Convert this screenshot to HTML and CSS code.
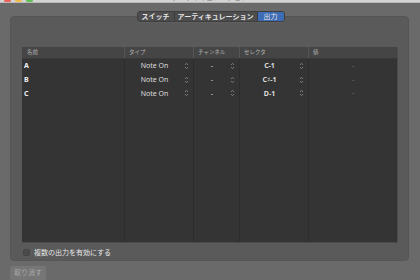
FILE: index.html
```html
<!DOCTYPE html>
<html lang="ja">
<head>
<meta charset="utf-8">
<link rel="stylesheet" href="styles.css">
</head>
<body>
<div class="window">
  <div class="titlebar">
    <div class="lights">
      <span class="light red"></span>
      <span class="light yellow"></span>
      <span class="light green"></span>
    </div>
    <div class="title">アーティキュレーション</div>
  </div>
  <div class="seg-wrap">
    <div class="segmented">
      <div class="seg s1">スイッチ</div>
      <div class="seg s2">アーティキュレーション</div>
      <div class="seg active">出力</div>
    </div>
  </div>
  <div class="panel">
    <div class="table">
      <div class="row head">
        <div class="cell">名前</div>
        <div class="cell">タイプ</div>
        <div class="cell">チャンネル</div>
        <div class="cell">セレクタ</div>
        <div class="cell">値</div>
      </div>
      <div class="body">
        <div class="row">
          <div class="cell name">A</div>
          <div class="cell pop"><span class="val">Note On</span><svg class="step" viewBox="0 0 5 8"><path d="M1 3 L2.5 1.3 L4 3 M1 5 L2.5 6.7 L4 5"/></svg></div>
          <div class="cell pop"><span class="val">-</span><svg class="step" viewBox="0 0 5 8"><path d="M1 3 L2.5 1.3 L4 3 M1 5 L2.5 6.7 L4 5"/></svg></div>
          <div class="cell pop"><span class="val b">C-1</span><svg class="step" viewBox="0 0 5 8"><path d="M1 3 L2.5 1.3 L4 3 M1 5 L2.5 6.7 L4 5"/></svg></div>
          <div class="cell dim">-</div>
        </div>
        <div class="row">
          <div class="cell name">B</div>
          <div class="cell pop"><span class="val">Note On</span><svg class="step" viewBox="0 0 5 8"><path d="M1 3 L2.5 1.3 L4 3 M1 5 L2.5 6.7 L4 5"/></svg></div>
          <div class="cell pop"><span class="val">-</span><svg class="step" viewBox="0 0 5 8"><path d="M1 3 L2.5 1.3 L4 3 M1 5 L2.5 6.7 L4 5"/></svg></div>
          <div class="cell pop"><span class="val b">C♯-1</span><svg class="step" viewBox="0 0 5 8"><path d="M1 3 L2.5 1.3 L4 3 M1 5 L2.5 6.7 L4 5"/></svg></div>
          <div class="cell dim">-</div>
        </div>
        <div class="row">
          <div class="cell name">C</div>
          <div class="cell pop"><span class="val">Note On</span><svg class="step" viewBox="0 0 5 8"><path d="M1 3 L2.5 1.3 L4 3 M1 5 L2.5 6.7 L4 5"/></svg></div>
          <div class="cell pop"><span class="val">-</span><svg class="step" viewBox="0 0 5 8"><path d="M1 3 L2.5 1.3 L4 3 M1 5 L2.5 6.7 L4 5"/></svg></div>
          <div class="cell pop"><span class="val b">D-1</span><svg class="step" viewBox="0 0 5 8"><path d="M1 3 L2.5 1.3 L4 3 M1 5 L2.5 6.7 L4 5"/></svg></div>
          <div class="cell dim">-</div>
        </div>
        <div class="row filler">
          <div class="cell"></div>
          <div class="cell"></div>
          <div class="cell"></div>
          <div class="cell"></div>
          <div class="cell"></div>
        </div>
      </div>
    </div>
    <label class="check">
      <span class="box"></span>
      <span class="check-label">複数の出力を有効にする</span>
    </label>
  </div>
  <div class="footer">
    <div class="btn">取り消す</div>
  </div>
</div>
</body>
</html>
```
FILE: styles.css
```css
* { box-sizing: border-box; }
html, body {
  margin: 0;
  padding: 0;
}
body {
  width: 420px;
  height: 280px;
  overflow: hidden;
  background: #6a6a6a;
  font-family: "Noto Sans CJK JP", "Noto Sans", "Liberation Sans", sans-serif;
  color: #e0e0e0;
}
.window {
  width: 420px;
  height: 280px;
  display: flex;
  flex-direction: column;
}
.titlebar {
  height: 3px;
  flex: 0 0 3px;
  background: #d4d4d4;
  border-bottom: 1px solid #b8b8b8;
  overflow: hidden;
  display: flex;
  position: relative;
}
.lights {
  display: flex;
  gap: 4px;
  padding-left: 4px;
  margin-top: -4px;
}
.light {
  width: 7px;
  height: 7px;
  border-radius: 50%;
  display: block;
}
.red { background: #f0605a; }
.yellow { background: #f3bd4f; }
.green { background: #5fc454; }
.title {
  position: absolute;
  left: 0;
  right: 0;
  top: -7px;
  text-align: center;
  font-size: 7px;
  line-height: 8px;
  color: #777;
}
.seg-wrap {
  display: flex;
  justify-content: center;
  padding-top: 8px;
  padding-left: 1px;
  position: relative;
  z-index: 2;
  height: 19px;
  flex: 0 0 19px;
}
.segmented {
  display: flex;
  height: 11px;
  border-radius: 3px;
  background: #4d4d4d;
  border: 1px solid #3e3e3e;
  overflow: hidden;
  box-shadow: 0 0.5px 0 rgba(255,255,255,0.08);
}
.seg {
  font-size: 7px;
  line-height: 9px;
  font-weight: 700;
  color: #e4e4e4;
  padding: 0;
  text-align: center;
  white-space: nowrap;
  border-right: 1px solid #3b3b3b;
}
.seg.s1 { width: 37px; }
.seg.s2 { width: 83px; }
.seg.active {
  background: #3d6db6;
  border-right: none;
  width: 26px;
  font-weight: 400;
}
.panel {
  margin: -6px 11px 0 10px;
  height: 246px;
  background: #5a5a5a;
  border-radius: 4px;
  border: 1px solid #555;
  padding: 30px 11px 0 11px;
  display: flex;
  flex-direction: column;
}
.table {
  height: 195px;
  display: flex;
  flex-direction: column;
  background: #343434;
  box-shadow: 0.5px 0.5px 0 #3c3c3c;
}
.row {
  display: grid;
  grid-template-columns: 102px 69px 46px 69px 1fr;
}
.head {
  height: 12px;
  background: #454545;
  border-bottom: 1px solid #3a3a3a;
}
.head .cell {
  font-size: 5.5px;
  line-height: 11px;
  color: #b4b4b4;
  padding-left: 4px;
  border-left: 1px solid #565656;
  white-space: nowrap;
}
.head .cell:first-child {
  border-left: none;
  padding-left: 5px;
}
.body {
  flex: 1;
  display: flex;
  flex-direction: column;
}
.body .row { height: 13.7px; }
.body .row.filler { flex: 1; }
.body .cell {
  border-left: 1px solid #2d2d2d;
  display: flex;
  align-items: center;
  font-family: "Noto Sans", "DejaVu Sans", "Noto Sans CJK JP", sans-serif;
  font-size: 7px;
  color: #dedede;
  white-space: nowrap;
}
.body .cell:first-child { border-left: none; }
.name {
  padding-left: 2px;
  font-weight: 700;
  color: #f2f2f2 !important;
}
.pop {
  justify-content: flex-end;
  padding-right: 4px;
}
.pop .val {
  flex: 1;
  text-align: center;
}
.val.b { font-weight: 700; }
.step {
  width: 5px;
  height: 8px;
  fill: none;
  stroke: #8a8a8a;
  stroke-width: 0.8;
}
.dim {
  justify-content: center;
  color: #9a9a9a !important;
  font-size: 6px !important;
}
.check {
  display: flex;
  align-items: center;
  gap: 4px;
  margin-top: 6px;
  padding-left: 1px;
}
.box {
  width: 7px;
  height: 7px;
  border-radius: 1.5px;
  background: #4a4a4a;
  border: 0.5px solid #444;
}
.check-label {
  font-size: 7px;
  line-height: 9px;
  color: #e8e8e8;
}
.footer {
  padding: 5px 0 0 10px;
}
.btn {
  width: 36px;
  height: 14px;
  background: #767676;
  border-radius: 2px;
  font-size: 7px;
  line-height: 13px;
  color: #a9a9a9;
  text-align: center;
}
```
